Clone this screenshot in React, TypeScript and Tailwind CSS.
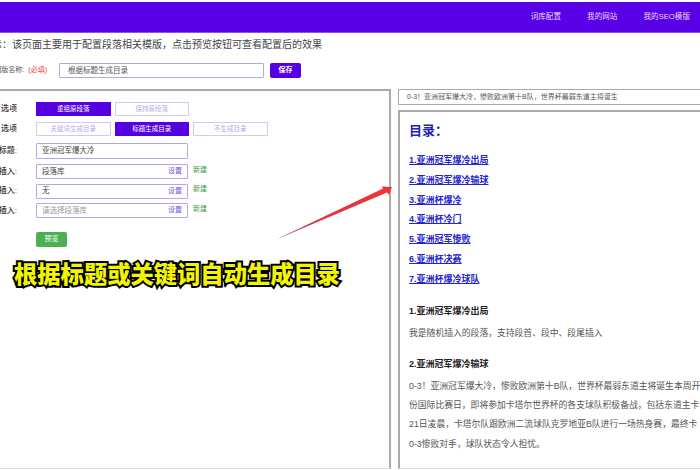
const cjk = "font-['Liberation_Sans','Noto_Sans_CJK_SC',sans-serif]";

function Label({ text }: { text: string }) {
  return (
    <div className="flex w-[17px] shrink-0 justify-end overflow-hidden whitespace-nowrap text-[8px] font-medium text-[#333]">
      {text}
    </div>
  );
}

function OptBtn({ text, active }: { text: string; active?: boolean }) {
  return active ? (
    <div className="flex h-[14px] w-[74.5px] items-center justify-center bg-[#5500e0] text-[6.5px] text-white">{text}</div>
  ) : (
    <div className="flex h-[14px] w-[74.5px] items-center justify-center border border-[#d5c8f2] bg-white text-[6.5px] text-[#b9a8e4]">{text}</div>
  );
}

function SelectRow({ label, value, muted }: { label: string; value: string; muted?: boolean }) {
  return (
    <div className="flex items-center">
      <Label text={label} />
      <div className="ml-[19px] flex h-[15px] w-[152px] items-center justify-between rounded-[1px] border border-[#b9a5e6] pl-[5px] pr-[5px]">
        <span className={"text-[7.5px] " + (muted ? "text-[#999]" : "text-[#444]")}>{value}</span>
        <span className="text-[7px] text-[#7a4fd8]">设置</span>
      </div>
      <span className="mb-[3px] ml-[5px] text-[7px] text-[#3f9a45]">新建</span>
    </div>
  );
}

const links = [
  "1.亚洲冠军爆冷出局",
  "2.亚洲冠军爆冷输球",
  "3.亚洲杯爆冷",
  "4.亚洲杯冷门",
  "5.亚洲冠军惨败",
  "6.亚洲杯决赛",
  "7.亚洲杯爆冷球队",
];

const bodyLines = [
  "0-3！亚洲冠军爆大冷，惨败欧洲第十B队，世界杯最弱东道主将诞生本周开",
  "份国际比赛日，即将参加卡塔尔世界杯的各支球队积极备战，包括东道主卡",
  "21日凌晨，卡塔尔队跟欧洲二流球队克罗地亚B队进行一场热身赛，最终卡",
  "0-3惨败对手，球队状态令人担忧。",
];

export default function App() {
  return (
    <div className={"relative h-[470px] w-[700px] overflow-hidden bg-white pt-[2px] " + cjk}>
      <nav className="flex h-[31px] items-center justify-end gap-[26px] border-b border-[#8a50ee] bg-[#5a00e6] pr-[10px] text-[7.5px] tracking-[0.1px] text-[#ead9ff]">
        <span>词库配置</span>
        <span>我的网站</span>
        <span>我的SEO模版</span>
      </nav>

      <p className="ml-[-8px] mt-[5px] h-[14px] whitespace-nowrap text-[10px] leading-[14px] text-[#444]">
        示：该页面主要用于配置段落相关模版，点击预览按钮可查看配置后的效果
      </p>

      <div className="mt-[11px] flex items-center">
        <div className="flex w-[47px] shrink-0 justify-end overflow-hidden whitespace-nowrap text-[7px] text-[#555]">
          模版名称:<span className="ml-[4px] text-[#e33]">(必填)</span>
        </div>
        <div className="ml-[12px] flex h-[15px] w-[205px] items-center rounded-[1px] border border-[#b9a5e6] pl-[8px] text-[7.5px] text-[#555]">
          根据标题生成目录
        </div>
        <div className="ml-[6px] flex h-[15px] w-[31px] items-center justify-center rounded-[2px] bg-[#5500e0] text-[7px] font-bold text-white">
          保存
        </div>
      </div>

      <div className="mt-[11px] flex h-[380px] items-stretch">
        <section className="w-[391px] shrink-0 border-b border-r-2 border-t-2 border-b-[#ddd] border-r-[#aaa] border-t-[#aaa] pt-[11px]">
          <div className="flex items-center">
            <Label text="选项" />
            <div className="ml-[19px] flex gap-[4px]">
              <OptBtn text="重组原段落" active />
              <OptBtn text="保持原段落" />
            </div>
          </div>
          <div className="mt-[6px] flex items-center">
            <Label text="选项" />
            <div className="ml-[19px] flex gap-[4px]">
              <OptBtn text="关键词生成目录" />
              <OptBtn text="标题生成目录" active />
              <OptBtn text="不生成目录" />
            </div>
          </div>
          <div className="mt-[7px] flex items-center">
            <Label text="标题:" />
            <div className="ml-[19px] flex h-[16px] w-[152px] items-center rounded-[1px] border border-[#b9a5e6] pl-[5px] text-[7.5px] text-[#444]">
              亚洲冠军爆大冷
            </div>
          </div>
          <div className="mt-[5px] flex flex-col gap-[4.5px]">
            <SelectRow label="插入:" value="段落库" />
            <SelectRow label="插入:" value="无" />
            <SelectRow label="插入:" value="请选择段落库" muted />
          </div>
          <div className="ml-[36px] mt-[14px] flex h-[15px] w-[31px] items-center justify-center rounded-[2px] bg-[#4caf50] text-[7px] text-white">
            预览
          </div>
        </section>

        <section className="ml-[7px] min-w-0 flex-1">
          <div className="flex h-[16px] items-center whitespace-nowrap border border-r-0 border-[#aaa] pl-[8px] text-[7px] text-[#555]">
            0-3！亚洲冠军爆大冷，惨败欧洲第十B队，世界杯最弱东道主将诞生
          </div>
          <div className="mt-[5px] h-[359px] overflow-hidden border-b border-l-2 border-t-2 border-b-[#ddd] border-l-[#aaa] border-t-[#aaa] pl-[9px] pt-[11px]">
            <h2 className="text-[13px] font-bold leading-[16px] text-[#2323b8]">目录：</h2>
            <ul className="mt-[12px] flex flex-col">
              {links.map((l) => (
                <li key={l} className="h-[19.8px] text-[9px] font-bold leading-[19.8px] text-[#2525cc] underline">
                  {l}
                </li>
              ))}
            </ul>
            <h3 className="mt-[13px] h-[16px] text-[9px] font-bold leading-[16px] text-[#222]">1.亚洲冠军爆冷出局</h3>
            <p className="mt-[6px] h-[16px] whitespace-nowrap text-[8.8px] leading-[16px] text-[#555]">
              我是随机插入的段落，支持段首、段中、段尾插入
            </p>
            <h3 className="mt-[15px] h-[16px] text-[9px] font-bold leading-[16px] text-[#222]">2.亚洲冠军爆冷输球</h3>
            <div className="mt-[5px] flex flex-col">
              {bodyLines.map((t) => (
                <p key={t} className="h-[19.4px] whitespace-nowrap text-[8.8px] leading-[19.4px] text-[#555]">
                  {t}
                </p>
              ))}
            </div>
          </div>
        </section>
      </div>

      <svg className="absolute left-[270px] top-[180px]" width="125" height="65" viewBox="0 0 125 65" fill="none">
        <defs>
          <linearGradient id="arrowFill" x1="5" y1="60" x2="122" y2="7" gradientUnits="userSpaceOnUse">
            <stop offset="0" stopColor="#a9455f" />
            <stop offset="0.45" stopColor="#dc3644" />
            <stop offset="1" stopColor="#f43333" />
          </linearGradient>
        </defs>
        <polygon points="5,60 113,8.5 111.5,6.5 122,7 119,15 117,12.5" fill="url(#arrowFill)" />
      </svg>

      <div className="absolute left-[14px] top-[257px] whitespace-nowrap text-[23.3px] font-black leading-[32px] text-[#f2f500] [-webkit-text-stroke:4px_#000] [font-family:'Noto_Sans_CJK_SC',sans-serif] [paint-order:stroke_fill]">
        根据标题或关键词自动生成目录
      </div>
    </div>
  );
}
